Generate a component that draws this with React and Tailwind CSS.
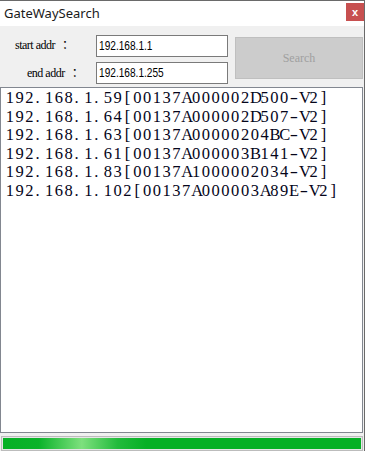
import React from 'react';

const results = [
  '192.168.1.59[00137A000002D500-V2]',
  '192.168.1.64[00137A000002D507-V2]',
  '192.168.1.63[00137A00000204BC-V2]',
  '192.168.1.61[00137A000003B141-V2]',
  '192.168.1.83[00137A1000002034-V2]',
  '192.168.1.102[00137A000003A89E-V2]',
];

// half-width cells, like the fixed-pitch font of the list box
const cellClass = (ch) => {
  if (ch === '.') return 'inline-block w-[9.8px] text-left pl-[1px]';
  if (ch === '-') return 'inline-block w-[9.8px] text-center scale-x-[1.5]';
  return 'inline-block w-[9.8px] text-center';
};

const Cells = ({ text }) =>
  text.split('').map((ch, i) => (
    <span key={i} className={cellClass(ch)}>
      {ch}
    </span>
  ));

const App = () => {
  return (
    <div className="w-[365px] h-[451px] bg-[#f0f0f0] border-t border-r border-[#6a6a6a] flex flex-col overflow-hidden">
      {/* Title bar */}
      <div className="h-[25px] bg-white flex items-start justify-between shrink-0">
        <span className="pl-[4px] pt-[3px] text-[13px] leading-[18px] text-[#1a1a1a] font-['Noto_Sans',sans-serif]">
          GateWaySearch
        </span>
        <button className="mt-[2px] w-[18px] h-[18px] bg-[#c75050] text-white flex items-center justify-center text-[11px] font-bold leading-none font-['Liberation_Sans',sans-serif]">
          x
        </button>
      </div>

      {/* Search form */}
      <div className="h-[61px] shrink-0 flex pt-[9px]">
        <div className="w-[96px] flex flex-col gap-[5px] text-[12px] text-black font-['Liberation_Serif',serif] tracking-[-0.5px]">
          <div className="h-[22px] flex items-center pl-[15px] pb-[3px]">
            start addr<span className="ml-[4px] font-['Noto_Sans_CJK_TC',serif]">：</span>
          </div>
          <div className="h-[22px] flex items-center pl-[27px] pb-[1px]">
            end addr<span className="ml-[4px] font-['Noto_Sans_CJK_TC',serif]">：</span>
          </div>
        </div>
        <div className="w-[132px] flex flex-col gap-[5px]">
          <div className="h-[22px] bg-white border border-[#7a7a7a] pl-[2px] flex items-center text-[13.5px] text-black font-['Liberation_Sans',sans-serif]">
            <span className="inline-block origin-left scale-x-[0.75]">192.168.1.1</span>
          </div>
          <div className="h-[22px] bg-white border border-[#7a7a7a] pl-[2px] flex items-center text-[13.5px] text-black font-['Liberation_Sans',sans-serif]">
            <span className="inline-block origin-left scale-x-[0.75]">192.168.1.255</span>
          </div>
        </div>
        <button
          disabled
          className="ml-[7px] mt-[2px] w-[128px] h-[42px] bg-[#cccccc] border border-[#bfbfbf] text-[#a0a0a0] text-[12px] font-['Liberation_Serif',serif]"
        >
          Search
        </button>
      </div>

      {/* Result list */}
      <div className="w-[363px] h-[346px] shrink-0 bg-white border border-[#828790] pt-[1px] pl-[4px]">
        {results.map((line) => (
          <div
            key={line}
            className="text-[16.5px] leading-[18.5px] text-[#05051a] whitespace-pre font-['Liberation_Serif',serif]"
          >
            <Cells text={line} />
          </div>
        ))}
      </div>

      {/* Progress bar */}
      <div className="mt-[3px] ml-[1px] w-[362px] h-[15px] shrink-0 border border-[#bcbcbc] bg-[#e6e6e6] p-[1px]">
        <div className="w-full h-full bg-[linear-gradient(90deg,#06b025_0%,#0bb32a_10%,#7ee07e_22%,#22bb3c_32%,#06b025_40%,#06b025_100%)]" />
      </div>
    </div>
  );
};

export default App;
